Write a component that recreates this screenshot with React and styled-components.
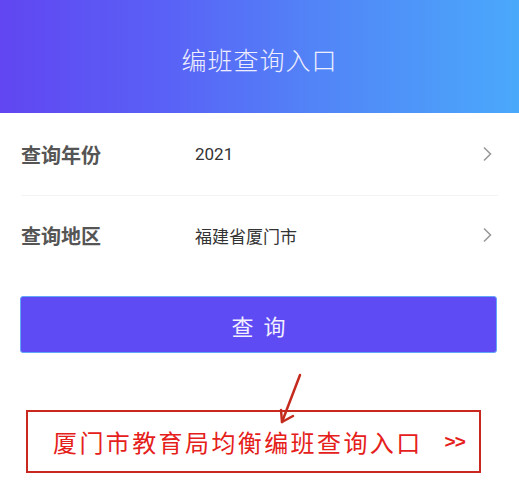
import React from "react";
import styled, { createGlobalStyle } from "styled-components";

const GlobalStyle = createGlobalStyle`
  html, body {
    margin: 0;
    padding: 0;
    background: #ffffff;
  }
  body {
    font-family: "Noto Sans CJK SC", "Noto Sans", sans-serif;
  }
`;

const Page = styled.div`
  width: 519px;
  height: 488px;
  overflow: hidden;
  background: #ffffff;
`;

const Header = styled.header`
  height: 113px;
  display: flex;
  align-items: center;
  justify-content: center;
  background: linear-gradient(90deg, #6146f1 0%, #5a5ff6 30%, #5283f7 60%, #4aa9fb 100%);
  color: #eeeeff;
  font-size: 25px;
  font-weight: 300;
  letter-spacing: 1px;
  padding-top: 4px;
  box-sizing: border-box;
`;

const List = styled.div`
  display: flex;
  flex-direction: column;
`;

const Row = styled.div`
  height: ${({ tall }) => (tall ? "82px" : "78px")};
  margin: 0 21px;
  display: flex;
  align-items: center;
  border-bottom: ${({ divider }) => (divider ? "1px solid #f3f4f6" : "none")};
`;

const Label = styled.span`
  width: 174px;
  font-size: 20px;
  font-weight: 700;
  color: #555555;
`;

const Value = styled.span`
  flex: 1;
  font-size: 17px;
  color: #333333;
  font-family: ${({ num }) => (num ? "Roboto, sans-serif" : "inherit")};
`;

const Chevron = styled.svg`
  width: 10px;
  height: 16px;
  margin-right: 6px;
`;

const QueryButton = styled.button`
  display: flex;
  align-items: center;
  justify-content: center;
  margin: 22px 22px 0 20px;
  width: 477px;
  height: 57px;
  border: 1px solid #62a6f8;
  border-radius: 3px;
  background: #5f4bf4;
  color: #f2f0ff;
  font-family: inherit;
  font-size: 22px;
  letter-spacing: 10px;
  padding: 0 0 0 10px;
`;

const Callout = styled.div`
  position: relative;
  margin-top: 57px;
  margin-left: 26px;
  width: 455px;
  height: 63px;
  box-sizing: border-box;
  border: 2px solid #c9281f;
  display: flex;
  align-items: center;
  padding-left: 25px;
  color: #e5201a;
  font-size: 24px;
  letter-spacing: 2.4px;
`;

const Arrows = styled.span`
  margin-left: 22px;
  font-family: "Liberation Sans", sans-serif;
  font-weight: 700;
  font-size: 19px;
  letter-spacing: -1px;
`;

const Pointer = styled.svg`
  position: absolute;
  left: 248px;
  top: -38px;
  width: 30px;
  height: 52px;
  overflow: visible;
`;

const ChevronIcon = () => (
  <Chevron viewBox="0 0 10 16">
    <path d="M2 1.5 L8.5 8 L2 14.5" fill="none" stroke="#9a9a9a" strokeWidth="1.6" />
  </Chevron>
);

export default function App() {
  return (
    <Page>
      <GlobalStyle />
      <Header>编班查询入口</Header>
      <List>
        <Row tall divider>
          <Label>查询年份</Label>
          <Value num>2021</Value>
          <ChevronIcon />
        </Row>
        <Row>
          <Label>查询地区</Label>
          <Value>福建省厦门市</Value>
          <ChevronIcon />
        </Row>
      </List>
      <QueryButton>查询</QueryButton>
      <Callout>
        <Pointer viewBox="0 0 30 52">
          <path d="M24 1 L6 48" fill="none" stroke="#c42a1e" strokeWidth="2.5" strokeLinecap="round" />
          <path d="M5 36 L6 48 L17 42" fill="none" stroke="#c42a1e" strokeWidth="2.5" strokeLinecap="round" strokeLinejoin="round" />
        </Pointer>
        厦门市教育局均衡编班查询入口
        <Arrows>&gt;&gt;</Arrows>
      </Callout>
    </Page>
  );
}
